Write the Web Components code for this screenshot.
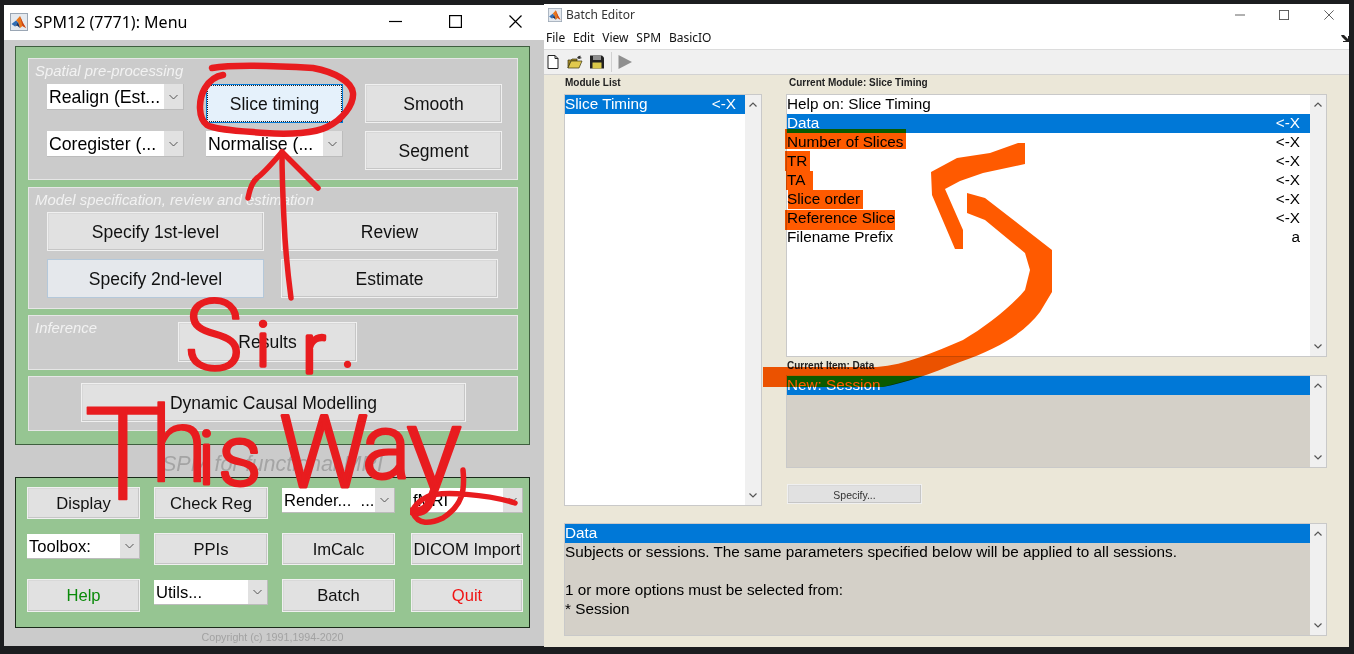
<!DOCTYPE html>
<html>
<head>
<meta charset="utf-8">
<title>SPM12</title>
<style>
html, body { margin: 0; height: 100%; background: #1c1d1f; overflow: hidden; }
body { font-family: "Liberation Sans", Arial, sans-serif; position: relative; }
</style>
</head>
<body>
<spm-desktop></spm-desktop>
<ink-layer></ink-layer>

<script>
const LOGO = `<svg viewBox="0 0 18 18" width="100%" height="100%">
  <rect x=".5" y=".5" width="17" height="17" fill="#e4e9ef" stroke="#9aa6b4"/>
  <path d="M1.5 11 6 7.5 8 9 5 13.5z" fill="#2f6db5"/>
  <path d="M6 7.5 10 3l3 7 3 5-3.500-2L10 15l-2-6z" fill="#e8761c"/>
  <path d="M10 3l3 7 3 5-3.500-2z" fill="#c8421a"/>
  <path d="M8 9l2 6-3-2.500-2 1z" fill="#16315e"/>
</svg>`;

// barre de titre avec les trois boutons
class WinTitle extends HTMLElement {
  constructor() {
    super();
    this.attachShadow({ mode: "open" }).innerHTML = `
    <style>
      :host { display: flex; align-items: center; background: #fff; color: var(--title-color, #000);
              height: var(--title-h, 33px); padding-bottom: var(--title-pad, 0); font: var(--title-font, 16px "Noto Sans", sans-serif); }
      .logo { width: var(--logo, 18px); height: var(--logo, 18px); margin: var(--logo-margin, 0 6px 0 6px); flex: none; }
      .name { flex: 1; white-space: nowrap; }
      .ctl { display: grid; grid-template-columns: repeat(3, var(--ctl-w, 60px)); justify-items: center; margin-right: var(--ctl-right, 0); }
      svg.c { width: var(--ctl-s, 13px); height: var(--ctl-s, 13px); stroke: var(--ctl-color, #000); fill: none; stroke-width: 1.200; }
    </style>
    <span class="logo">${LOGO}</span>
    <span class="name"><slot></slot></span>
    <span class="ctl">
      <svg class="c" viewBox="0 0 13 13"><path d="M0 6.500h13"/></svg>
      <svg class="c" viewBox="0 0 13 13"><rect x=".6" y=".6" width="11.800" height="11.800"/></svg>
      <svg class="c" viewBox="0 0 13 13"><path d="M.5.500l12 12M12.500.500l-12 12"/></svg>
    </span>`;
  }
}
customElements.define("win-title", WinTitle);

class SpmButton extends HTMLElement {
  constructor() {
    super();
    this.attachShadow({ mode: "open" }).innerHTML = `
    <style>
      :host { display: flex; align-items: center; justify-content: center; box-sizing: border-box; background: #e1e1e1;
              border: 1px solid #f0f0f0; box-shadow: inset -1px -1px 0 #c6c6c6, inset 1px 1px 0 #d8d8d8; padding-top: 1px;
              font-size: var(--btn-font, 17.500px); color: #111; white-space: nowrap; }
      :host([state=focus]) { background: #e5f1fb; border-color: #0078d7; box-shadow: none; outline: 1px dotted #222; outline-offset: -2px; }
      :host([state=hover]) { background: #e5e8ec; border-color: #b4c8da; box-shadow: none; }
    </style>
    <slot></slot>`;
  }
}
customElements.define("spm-button", SpmButton);

class SpmPopup extends HTMLElement {
  constructor() {
    super();
    this.attachShadow({ mode: "open" }).innerHTML = `
    <style>
      :host { display: flex; box-sizing: border-box; align-self: start; height: var(--pop-h, 26px); background: #fff; overflow: hidden;
              border: 1px solid #bcbcbc; border-width: 0 1px 1px 0; margin-top: var(--pop-top, 0); font-size: var(--btn-font, 17.700px); color: #000; white-space: pre; }
      .t { flex: 1; padding-left: 2px; line-height: var(--pop-lh, 27px); overflow: hidden; }
      .a { width: 19px; background: #e1e1e1; display: flex; align-items: center; justify-content: center; }
      svg { width: 9px; height: 6px; fill: none; stroke: #555; stroke-width: 1; }
    </style>
    <span class="t"><slot></slot></span>
    <span class="a"><svg viewBox="0 0 9 6"><path d="M.5 1 4.500 5 8.500 1"/></svg></span>`;
  }
}
customElements.define("spm-popup", SpmPopup);

// panneau gris avec legende en italique
class SpmPanel extends HTMLElement {
  constructor() {
    super();
    this.attachShadow({ mode: "open" }).innerHTML = `
    <style>
      :host { display: grid; box-sizing: border-box; background: #cbcbcb; border: 1px solid #e6e6e6; height: var(--h); }
      .l { grid-area: 1 / 1; padding: 3px 0 0 6px; color: #f2f2f2; font-style: italic; font-size: 14.900px; line-height: 18px; white-space: nowrap; }
      .c { grid-area: 1 / 1; display: block; padding: var(--pad); }
    </style>
    <span class="l"><slot name="label"></slot></span>
    <div class="c"><slot></slot></div>`;
  }
}
customElements.define("spm-panel", SpmPanel);

class SpmMenu extends HTMLElement {
  constructor() {
    super();
    this.attachShadow({ mode: "open" }).innerHTML = `
    <style>
      :host { display: block; width: 540px; height: 641px; margin-top: 5px; background: #cbcbcb; }
      .body { padding: 6px 14px 0 11px; }
      .green { box-sizing: border-box; background: #96c592; border: 1px solid #3f5f3f; }
      .top { height: 399px; padding: 11px 11px 0 12px; display: flex; flex-direction: column; gap: 6px; }
      .first { margin-bottom: 1px; }
      .g { display: grid; }
      .g1 { grid-template-columns: repeat(3, 137px); grid-template-rows: 39px 39px; column-gap: 22px; row-gap: 8px; }
      .g2 { grid-template-columns: 217px 217px; grid-template-rows: 39px 39px; column-gap: 17px; row-gap: 8px; }
      .one { display: flex; }
      .brand { height: 32px; line-height: 38px; text-align: center; font-style: italic; font-size: 21.500px; color: #a4a4a4; white-space: nowrap; }
      .bottom { height: 151px; padding: 9px 0 0 11px; }
      .g3 { grid-template-columns: 113px 114px 113px 114px; grid-template-rows: 32px 32px 33px; column-gap: 14px; row-gap: 14px; --pop-h: 25px; --pop-top: 1px; --pop-lh: 26px; --btn-font: 16.600px; }
      .g3 .col4 { margin-left: 2px; }
      .copy { text-align: center; font-size: 10.700px; color: #a2a2a2; line-height: 19px; }
    </style>
    <win-title style="--title-pad:2px;--ctl-right:-1px;">SPM12 (7771): Menu</win-title>
    <div class="body">
      <div class="green top">
        <spm-panel class="first" style="--h:122px;--pad:25px 0 0 18px;">
          <span slot="label">Spatial pre-processing</span>
          <div class="g g1">
            <spm-popup>Realign (Est...</spm-popup>
            <spm-button state="focus">Slice timing</spm-button>
            <spm-button>Smooth</spm-button>
            <spm-popup>Coregister (...</spm-popup>
            <spm-popup>Normalise (...</spm-popup>
            <spm-button>Segment</spm-button>
          </div>
        </spm-panel>
        <spm-panel style="--h:122px;--pad:24px 0 0 18px;">
          <span slot="label">Model specification, review and estimation</span>
          <div class="g g2">
            <spm-button>Specify 1st-level</spm-button>
            <spm-button>Review</spm-button>
            <spm-button state="hover">Specify 2nd-level</spm-button>
            <spm-button>Estimate</spm-button>
          </div>
        </spm-panel>
        <spm-panel style="--h:55px;--pad:6px 0 0 149px;">
          <span slot="label">Inference</span>
          <div class="one"><spm-button style="width:179px;height:40px;">Results</spm-button></div>
        </spm-panel>
        <spm-panel style="--h:55px;--pad:6px 0 0 52px;">
          <div class="one"><spm-button style="width:385px;height:39px;">Dynamic Causal Modelling</spm-button></div>
        </spm-panel>
      </div>
      <div class="brand">SPM for functional MRI</div>
      <div class="green bottom" style="border-color:#1a2a1a">
        <div class="g g3">
          <spm-button>Display</spm-button>
          <spm-button>Check Reg</spm-button>
          <spm-popup>Render...  ...</spm-popup>
          <spm-popup class="col4">fMRI</spm-popup>
          <spm-popup>Toolbox:</spm-popup>
          <spm-button>PPIs</spm-button>
          <spm-button>ImCalc</spm-button>
          <spm-button class="col4">DICOM Import</spm-button>
          <spm-button style="color:#0a8a0a">Help</spm-button>
          <spm-popup>Utils...</spm-popup>
          <spm-button>Batch</spm-button>
          <spm-button class="col4" style="color:#f01414">Quit</spm-button>
        </div>
      </div>
      <div class="copy">Copyright (c) 1991,1994-2020</div>
    </div>`;
  }
}
customElements.define("spm-menu", SpmMenu);

class MatList extends HTMLElement {
  constructor() {
    super();
    this.attachShadow({ mode: "open" }).innerHTML = `
    <style>
      :host { display: flex; box-sizing: border-box; height: var(--h); border: 1px solid #c9c9c9; background: var(--bg, #fff); }
      .rows { flex: 1; min-width: 0; display: block; }
      .bar { width: 16px; background: #f0f0f0; display: flex; flex-direction: column; justify-content: space-between; align-items: center; padding: 7px 0; box-sizing: border-box; }
      svg { width: 8px; height: 5px; fill: none; stroke: #555; stroke-width: 1.200; }
    </style>
    <div class="rows"><slot></slot></div>
    <div class="bar">
      <svg viewBox="0 0 8 5"><path d="M.5 4.500 4 1l3.500 3.500"/></svg>
      <svg viewBox="0 0 8 5"><path d="M.5.500 4 4 7.500.500"/></svg>
    </div>`;
  }
}
customElements.define("mat-list", MatList);

class MatRow extends HTMLElement {
  constructor() {
    super();
    this.attachShadow({ mode: "open" }).innerHTML = `
    <style>
      :host { display: flex; justify-content: space-between; height: 19px; line-height: 18px; font-size: 15.300px; color: #000; white-space: pre; padding: 0 var(--row-right, 10px) 0 0; }
      :host([sel]) { background: #0078d7; color: #fff; }
    </style>
    <span><slot></slot></span><span><slot name="end"></slot></span>`;
  }
}
customElements.define("mat-row", MatRow);

class BatchEditor extends HTMLElement {
  constructor() {
    super();
    this.attachShadow({ mode: "open" }).innerHTML = `
    <style>
      :host { display: block; width: 805px; height: 643px; margin-top: 4px; background: #ebe7d8; }
      .menu { position: relative; display: flex; gap: 7.800px; height: 24px; background: #fff; padding-left: 2px; font: 12px "Noto Sans", sans-serif; line-height: 26px; color: #111; }
      .menu svg { position: absolute; right: 0; top: 9px; width: 8px; height: 8px; }
      .tools { display: flex; align-items: center; box-sizing: border-box; height: 26px; background: #f0f0f0; border-top: 1px solid #dcdcdc; border-bottom: 1px solid #d2d2d2; padding-left: 1px; }
      .tools svg { width: 16px; height: 16px; margin-right: 6px; flex: none; }
      .tools i { width: 1px; height: 20px; background: #d0d0d0; margin: 0 5px 0 0; }
      .main { display: grid; grid-template-columns: 198px 541px; column-gap: 24px; padding: 0 0 0 20px; height: 448px; }
      .col { display: flex; flex-direction: column; }
      .cap { height: 19px; line-height: 16px; font-size: 10px; font-weight: bold; color: #222; padding-left: 1px; white-space: nowrap; }
      .spec { margin: 16px 0 0 1px; width: 135px; height: 20px; --btn-font: 10.500px; color: #333; }
      .help { margin: 0 0 0 20px; width: 763px; }
    </style>
    <win-title style="--title-h:21px;--title-font:12px 'Noto Sans',sans-serif;--logo:14px;--logo-margin:0 4px 0 4px;--ctl-w:44.500px;--ctl-s:10px;--ctl-color:#555;--ctl-right:-2px;--title-color:#333;">Batch Editor</win-title>
    <div class="menu"><span>File</span><span>Edit</span><span>View</span><span>SPM</span><span>BasicIO</span>
      <svg viewBox="0 0 8 8"><path d="M0 1h3l4 4V2h1v6H2V7h3L1 3z" fill="#222"/></svg></div>
    <div class="tools">
      <svg viewBox="0 0 16 16"><path d="M3 1.500h7l3 3v10H3z" fill="#fff" stroke="#222"/><path d="M10 1.500v3h3" fill="none" stroke="#222"/></svg>
      <svg viewBox="0 0 16 16"><path d="M1 6h3l1-1h5v2H4l-3 7z" fill="#a58b2a" stroke="#3a3410" stroke-width=".7"/><path d="M1 14l3-7h11l-3 7z" fill="#e0c94e" stroke="#3a3410" stroke-width=".7"/><path d="M10 4c1-2 2.500-2.500 4-2l-1 1 2 1-3 1z" fill="#333"/></svg>
      <svg viewBox="0 0 16 16"><path d="M1 1.500h12l2 2v11H1z" fill="#222"/><rect x="4" y="2" width="8" height="4" fill="#8f8f8f"/><rect x="3.500" y="8.500" width="9" height="6" fill="#d9c84a"/></svg>
      <i></i>
      <svg viewBox="0 0 16 16"><path d="M1.500 1 15 8 1.500 15z" fill="#8f8f8f"/></svg>
    </div>
    <div class="main">
      <div class="col">
        <div class="cap">Module List</div>
        <mat-list style="--h:412px;">
          <mat-row sel style="--row-right:9px;">Slice Timing<span slot="end">&lt;-X</span></mat-row>
        </mat-list>
      </div>
      <div class="col">
        <div class="cap" style="padding-left:3px;">Current Module: Slice Timing</div>
        <mat-list style="--h:263px;">
          <mat-row>Help on: Slice Timing</mat-row>
          <mat-row sel>Data<span slot="end">&lt;-X</span></mat-row>
          <mat-row>Number of Slices<span slot="end">&lt;-X</span></mat-row>
          <mat-row>TR<span slot="end">&lt;-X</span></mat-row>
          <mat-row>TA<span slot="end">&lt;-X</span></mat-row>
          <mat-row>Slice order<span slot="end">&lt;-X</span></mat-row>
          <mat-row>Reference Slice<span slot="end">&lt;-X</span></mat-row>
          <mat-row>Filename Prefix<span slot="end">a</span></mat-row>
        </mat-list>
        <div class="cap" style="height:18px;line-height:18px;">Current Item: Data</div>
        <mat-list style="--h:93px;--bg:#d4d0c8;">
          <mat-row sel>New: Session</mat-row>
        </mat-list>
        <spm-button class="spec">Specify...</spm-button>
      </div>
    </div>
    <mat-list class="help" style="--h:113px;--bg:#d4d0c8;">
      <mat-row sel>Data</mat-row>
      <mat-row>Subjects or sessions. The same parameters specified below will be applied to all sessions.</mat-row>
      <mat-row> </mat-row>
      <mat-row>1 or more options must be selected from:</mat-row>
      <mat-row>* Session</mat-row>
    </mat-list>`;
  }
}
customElements.define("batch-editor", BatchEditor);

class SpmDesktop extends HTMLElement {
  constructor() {
    super();
    this.attachShadow({ mode: "open" }).innerHTML = `
    <style>:host { display: flex; align-items: flex-start; padding-left: 4px; }</style>
    <spm-menu></spm-menu><batch-editor></batch-editor>`;
  }
}
customElements.define("spm-desktop", SpmDesktop);

// annotations au feutre par dessus les deux fenetres
class InkLayer extends HTMLElement {
  constructor() {
    super();
    this.attachShadow({ mode: "open" }).innerHTML = `
    <style>
      :host { position: absolute; left: 0; top: 0; width: 1354px; height: 654px; pointer-events: none; }
      svg { position: absolute; left: 0; top: 0; }
      .mul { mix-blend-mode: multiply; }
      .lit { mix-blend-mode: lighten; }
      .red { fill: none; stroke: #e81c1f; stroke-width: 5.500; stroke-linecap: round; stroke-linejoin: round; }
      text { fill: #e81c1f; stroke: #e81c1f; stroke-width: 1.500; stroke-linejoin: round; font-family: Roboto, sans-serif; font-weight: 300; }
    </style>
    <svg class="mul" width="1354" height="654">
      <g fill="#ff5a00">
        <rect x="785" y="129" width="121" height="20"/>
        <rect x="785" y="151" width="25" height="20"/>
        <rect x="786" y="171" width="27" height="19"/>
        <rect x="788" y="190" width="75" height="19"/>
        <rect x="785" y="210" width="110" height="20"/>
        <path d="M1018 143h7v21l-42 9-23 8-15 8 18 41v19h-8l-23-54-1-23 26-14 33-5z"/>
        <path d="M967 193L985 198 1052 250V292L1040 312C1025 332 1000 348 960 362 930 374 905 383 883 387H763V367H877C905 365 935 352 963 340 985 327 1010 308 1025 290L1030 270 1025 253 985 220 967 213z"/>
      </g>
    </svg>
    <svg class="lit" width="1354" height="654">
      <g fill="#0a5a00">
        <rect x="787" y="129" width="119" height="4"/>
        <path d="M787 375h140l-44 12h-96z"/>
      </g>
    </svg>
    <svg width="1354" height="654">
      <path class="red" style="stroke-width:6.500" d="M212 68C235 64 280 66 313 68 335 72 352 82 353 93 354 105 342 120 327 127 315 133 290 135 265 133 240 131 215 130 207 125 198 118 198 100 205 88 210 80 216 76 223 75"/>
      <path class="red" d="M282 152C282 180 283 200 284 220 285 245 288 275 291 298"/>
      <path class="red" d="M248 198C250 188 252 182 257 178 265 172 275 160 282 152 295 165 308 178 318 188"/>
      <path class="red" d="M427 497C440 490 490 495 515 503M463 470C465 490 463 505 443 518 430 524 418 525 413 513 412 507 420 500 427 497"/>
      <text><tspan x="184" y="370" font-size="100">S</tspan><tspan x="256" y="366" font-size="62" stroke-width="3.500">i</tspan><tspan x="302" y="373" font-size="70" stroke-width="3.500">r</tspan><tspan x="343" y="366" font-size="40" stroke-width="4">.</tspan></text>
      <text><tspan x="84" y="500" font-size="130">T</tspan><tspan x="150" y="482" font-size="106">h</tspan><tspan x="198" y="484" font-size="75" stroke-width="3">i</tspan><tspan x="218" y="485" font-size="86" stroke-width="3">s</tspan><tspan x="279" y="487" font-size="100" stroke-width="3">W</tspan><tspan x="362" y="478" font-size="90" stroke-width="3">a</tspan><tspan x="406" y="490" font-size="118" stroke-width="2.500">y</tspan></text>
    </svg>`;
  }
}
customElements.define("ink-layer", InkLayer);
</script>
</body>
</html>
